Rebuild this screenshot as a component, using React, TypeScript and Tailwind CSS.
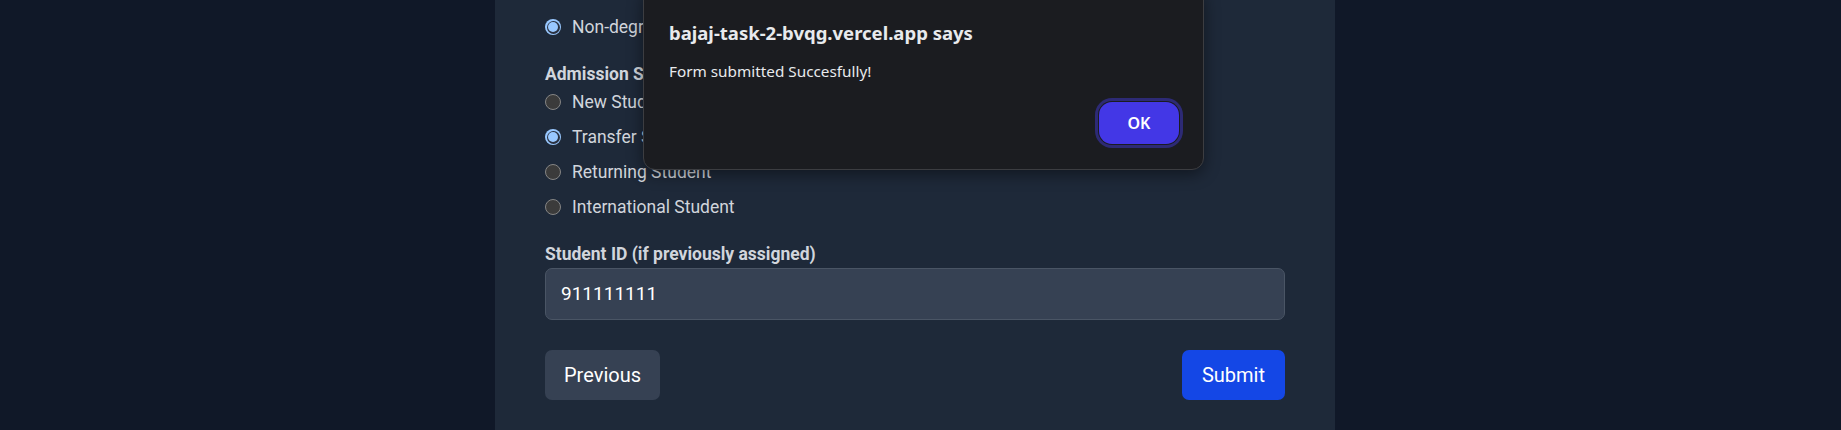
import React from "react";

const cardFont = { fontFamily: 'Roboto, "Noto Sans", sans-serif' };
const dialogFont = { fontFamily: '"Noto Sans", "Open Sans", sans-serif' };

function Radio({ checked, label }: { checked?: boolean; label: string }) {
  return (
    <div className="flex h-[30px] items-center gap-[11px]">
      {checked ? (
        <span className="flex h-[16px] w-[16px] shrink-0 items-center justify-center rounded-full bg-[#99c8ff]">
          <span className="flex h-[13px] w-[13px] items-center justify-center rounded-full bg-[#2a3140]">
            <span className="h-[10px] w-[10px] rounded-full bg-[#99c8ff]" />
          </span>
        </span>
      ) : (
        <span className="h-[16px] w-[16px] shrink-0 rounded-full border border-[#858585] bg-[#3b3b3b]" />
      )}
      <span className="text-[17.5px] leading-[30px] text-gray-300">{label}</span>
    </div>
  );
}

export default function App() {
  return (
    <div className="relative h-[430px] overflow-hidden bg-gray-900">
      <div className="flex justify-center pr-[11px]" style={cardFont}>
        <div className="w-[840px] bg-gray-800 px-[50px] pt-[12px] pb-[50px]">
          <Radio checked label="Non-degree Student" />

          <div className="mt-[20px]">
            <div className="text-[17.5px] font-bold leading-[25px] text-gray-300">Admission Status</div>
            <div className="flex flex-col gap-[5px]">
              <Radio label="New Student" />
              <Radio checked label="Transfer Student" />
              <Radio label="Returning Student" />
              <Radio label="International Student" />
            </div>
          </div>

          <div className="mt-[20px]">
            <div className="mb-[1px] text-[17.5px] font-bold leading-[25px] text-gray-300">
              Student ID (if previously assigned)
            </div>
            <div className="flex h-[52px] items-center rounded-[7px] border border-gray-600 bg-gray-700 px-[15px] text-[19px] text-white">
              911111111
            </div>
          </div>

          <div className="mt-[30px] flex justify-between">
            <button className="h-[50px] rounded-[7px] bg-gray-700 px-[19px] text-[20px] text-white">Previous</button>
            <button className="h-[50px] rounded-[7px] bg-blue-700 px-[20px] text-[20px] text-white">Submit</button>
          </div>
        </div>
      </div>

      <div
        className="absolute left-[643px] top-[-12px] flex h-[182px] w-[561px] flex-col rounded-[12px] border border-[#3c3d41] bg-[#1b1c20] pl-[25px] pr-[24px] pt-[32px] shadow-[0_4px_16px_rgba(0,0,0,0.45)]"
        style={dialogFont}
      >
        <div className="whitespace-nowrap text-[18.5px] font-bold leading-[24px] text-[#e8eaed]">
          bajaj-task-2-bvqg.vercel.app says
        </div>
        <div className="mt-[16px] text-[15.3px] leading-[20px] text-[#e8eaed]">Form submitted Succesfully!</div>
        <div className="mt-[21px] flex justify-end">
          <button className="h-[42px] w-[80px] rounded-[13px] bg-[#4337e6] text-[16px] font-semibold text-white shadow-[0_0_0_1px_#1b1c20,0_0_0_4px_#2d2a75]">
            OK
          </button>
        </div>
      </div>
    </div>
  );
}
